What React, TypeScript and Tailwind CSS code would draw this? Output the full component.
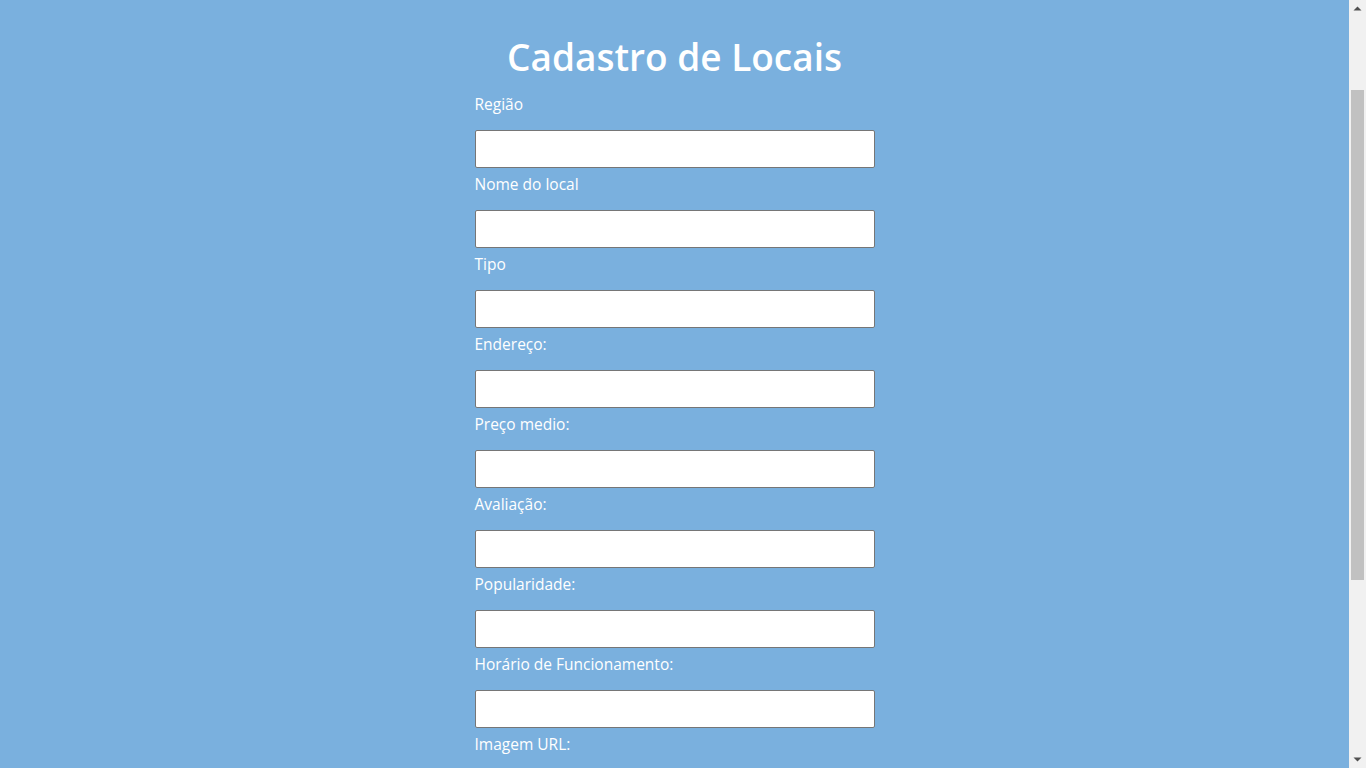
const fields = [
  "Região",
  "Nome do local",
  "Tipo",
  "Endereço:",
  "Preço medio:",
  "Avaliação:",
  "Popularidade:",
  "Horário de Funcionamento:",
  "Imagem URL:",
];

function Scrollbar() {
  return (
    <div className="fixed right-0 top-0 flex h-screen w-[17px] flex-col items-center bg-[#f1f1f1]">
      <svg width="17" height="17" viewBox="0 0 17 17" className="shrink-0">
        <path d="M4.5 10.5h8l-4-4z" fill="#505050" />
      </svg>
      <div className="flex-1 w-full">
        <div className="mx-auto mt-[73px] h-[490px] w-[13px] bg-[#c1c1c1]" />
      </div>
      <svg width="17" height="17" viewBox="0 0 17 17" className="shrink-0">
        <path d="M4.5 6.5h8l-4 4z" fill="#505050" />
      </svg>
    </div>
  );
}

export default function App() {
  return (
    <div className="min-h-screen bg-[#7ab0de] pr-[17px] pt-[33px] pb-[200px] font-['Open_Sans',sans-serif] text-white">
      <form className="mx-auto w-[400px]">
        <h1 className="text-center text-[37px] font-semibold leading-[48px]">Cadastro de Locais</h1>
        <div className="mt-[11px]">
          {fields.map((label) => (
            <div key={label}>
              <label className="mt-1 block text-[15.5px] leading-6">{label}</label>
              <input
                type="text"
                className="mt-[14px] block h-[38px] w-full rounded-[2px] border border-[#767676] bg-white px-2 text-black outline-none"
              />
            </div>
          ))}
        </div>
        <button
          type="submit"
          className="mt-5 rounded-[2px] border border-[#767676] bg-white px-4 py-2 text-black"
        >
          Cadastrar
        </button>
      </form>
      <Scrollbar />
    </div>
  );
}
